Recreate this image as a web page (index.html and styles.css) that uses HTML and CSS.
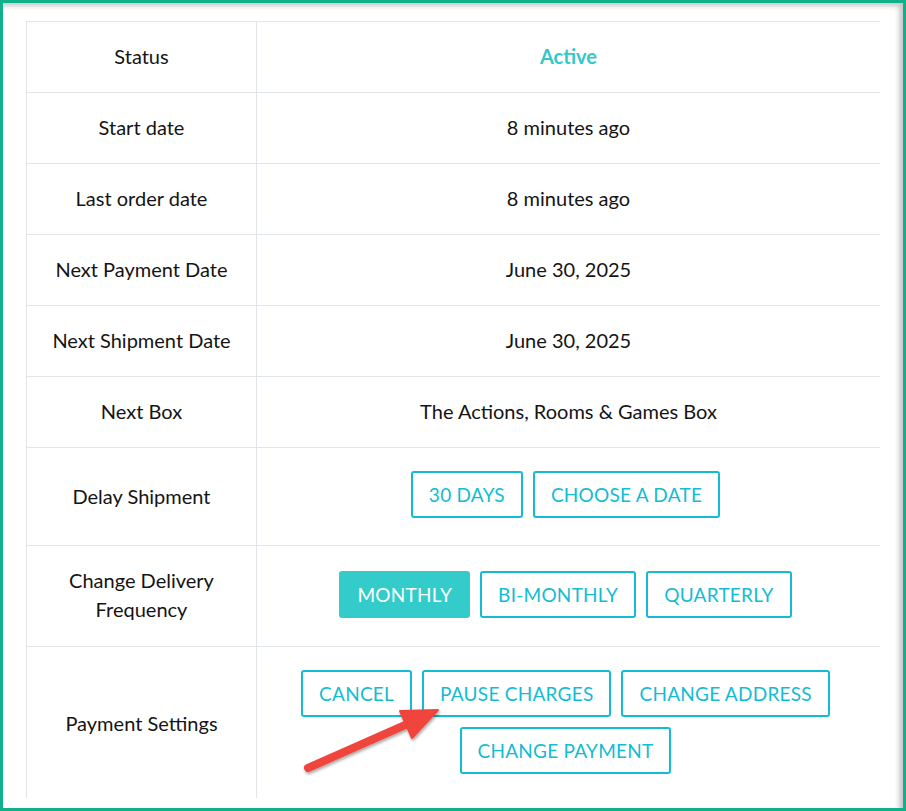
FILE: index.html
```html
<!DOCTYPE html>
<html>
<head>
<meta charset="utf-8">
<link rel="stylesheet" href="styles.css">
</head>
<body>
<div class="frame">
  <div class="clip">
    <table class="subs">
      <colgroup><col class="c1"><col class="c2"></colgroup>
      <tr><td>Status</td><td class="active">Active</td></tr>
      <tr><td>Start date</td><td>8 minutes ago</td></tr>
      <tr><td>Last order date</td><td>8 minutes ago</td></tr>
      <tr><td>Next Payment Date</td><td>June 30, 2025</td></tr>
      <tr><td>Next Shipment Date</td><td>June 30, 2025</td></tr>
      <tr><td>Next Box</td><td>The Actions, Rooms &amp; Games Box</td></tr>
      <tr><td>Delay Shipment</td><td><div class="btns"><button class="btn">30 Days</button><button class="btn">Choose a date</button></div></td></tr>
      <tr><td class="two-line">Change Delivery<br>Frequency</td><td><div class="btns"><button class="btn on">Monthly</button><button class="btn">Bi-Monthly</button><button class="btn">Quarterly</button></div></td></tr>
      <tr><td>Payment Settings</td><td><div class="btns pay"><button class="btn">Cancel</button><button class="btn">Pause Charges</button><button class="btn">Change Address</button><button class="btn">Change Payment</button></div></td></tr>
    </table>
  </div>
</div>
<svg class="arrow" width="906" height="811" viewBox="0 0 906 811">
  <defs>
    <filter id="sh" x="-20%" y="-20%" width="140%" height="140%">
      <feDropShadow dx="1" dy="2" stdDeviation="1.5" flood-color="#000" flood-opacity="0.35"/>
    </filter>
  </defs>
  <g filter="url(#sh)" fill="#f0443e" stroke="#f0443e">
    <line x1="308" y1="768" x2="412" y2="722" stroke-width="8" stroke-linecap="round"/>
    <polygon points="438,710 400,711 412,738" stroke-width="2" stroke-linejoin="round"/>
  </g>
</svg>
</body>
</html>
```
FILE: styles.css
```css
html, body {
  margin: 0;
  padding: 0;
}
body {
  width: 906px;
  height: 811px;
  position: relative;
  overflow: hidden;
  background: #fff;
}
.frame {
  box-sizing: border-box;
  width: 906px;
  height: 811px;
  border: 3px solid #10b08b;
  padding: 18px 23px 10px 23px;
  background: #fff;
  box-shadow: inset -5px 4px 5px -1px rgba(0,0,0,0.22);
}
.clip {
  height: 777px;
  overflow: hidden;
}
.subs {
  border-collapse: collapse;
  table-layout: fixed;
  width: 855px;
  font-family: Lato, "Noto Sans", sans-serif;
  font-size: 20px;
  color: #141414;
}
.c1 { width: 230px; }
.subs td {
  border: 1px solid #e1e5ea;
  padding: 20px 14px 22px;
  line-height: 28px;
  text-align: center;
  vertical-align: middle;
}
.subs td.two-line {
  line-height: 29px;
}
.subs td.active {
  color: #33c8c9;
  font-weight: 700;
}
.btns {
  display: flex;
  flex-wrap: wrap;
  justify-content: center;
  gap: 10px;
  padding: 3px 6px 5px 0;
}
.btn {
  box-sizing: border-box;
  height: 47px;
  padding: 0 16px;
  border: 2px solid #13bcd4;
  border-radius: 3px;
  background: #fff;
  color: #13bcd4;
  font-family: Lato, "Noto Sans", sans-serif;
  font-size: 19px;
  line-height: 43px;
  text-transform: uppercase;
  letter-spacing: 0.25px;
}
.btn.on {
  background: #33cccb;
  border-color: #33cccb;
  color: #fff;
}
.arrow {
  position: absolute;
  left: 0;
  top: 0;
  pointer-events: none;
}
```
